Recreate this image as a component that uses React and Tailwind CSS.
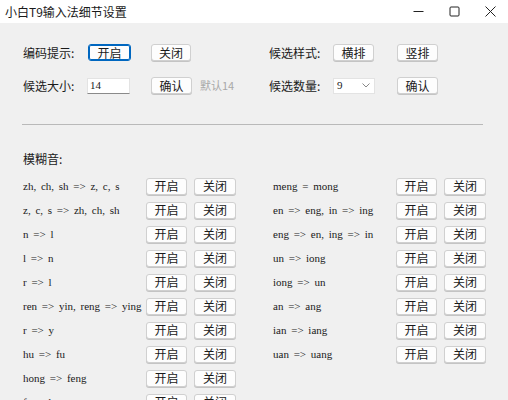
import React from 'react';

const cjk = { fontFamily: '"Microsoft YaHei", "Noto Sans CJK SC", "Noto Sans", sans-serif' };
const latin = { fontFamily: '"Liberation Serif", "Noto Sans CJK SC", serif' };

// 模糊音列表
const leftRules = [
  'zh, ch, sh => z, c, s',
  'z, c, s => zh, ch, sh',
  'n => l',
  'l => n',
  'r => l',
  'ren => yin, reng => ying',
  'r => y',
  'hu => fu',
  'hong => feng',
  'f => h',
];

const rightRules = [
  'meng = mong',
  'en => eng, in => ing',
  'eng => en, ing => in',
  'un => iong',
  'iong => un',
  'an => ang',
  'ian => iang',
  'uan => uang',
];

const Btn = ({ children, focused, w = 'w-[41px]' }) => (
  <button
    className={`${w} h-[17px] flex items-center justify-center rounded-[3px] bg-[#fdfdfd] text-[12px] text-[#1a1a1a] leading-none ${
      focused ? 'border border-[#0067c0] shadow-[inset_0_0_0_1px_#0067c0]' : 'border border-[#d0d0d0] shadow-[0_1px_0_#c4c4c4]'
    }`}
    style={cjk}
  >
    {children}
  </button>
);

const RuleRow = ({ text, textW }) => (
  <div className="h-[24px] flex items-center">
    <div className={`${textW} text-[11px] text-[#1a1a1a] whitespace-pre [word-spacing:2px]`} style={latin}>
      {text}
    </div>
    <div className="flex gap-[7px]">
      <Btn>开启</Btn>
      <Btn w="w-[42px]">关闭</Btn>
    </div>
  </div>
);

export default function App() {
  return (
    <div className="w-[508px] h-[400px] bg-[#f0f0f0] overflow-hidden text-[#1a1a1a]" style={cjk}>
      {/* 標題列 */}
      <div className="h-[23px] bg-white flex items-center justify-between">
        <span className="pl-[5px] text-[12px] pt-[1px]">小白T9输入法细节设置</span>
        <div className="flex items-center h-full">
          <div className="w-[36px] flex justify-center">
            <svg width="11" height="11" viewBox="0 0 11 11"><path d="M0.5 5.5h10" stroke="#222" strokeWidth="1" /></svg>
          </div>
          <div className="w-[36px] flex justify-center">
            <svg width="11" height="11" viewBox="0 0 11 11"><rect x="1" y="1" width="9" height="9" rx="1" fill="none" stroke="#222" strokeWidth="1" /></svg>
          </div>
          <div className="w-[36px] flex justify-center">
            <svg width="11" height="11" viewBox="0 0 11 11"><path d="M0.5 0.5l10 10M10.5 0.5l-10 10" stroke="#222" strokeWidth="1" /></svg>
          </div>
        </div>
      </div>

      {/* 基本設定 */}
      <div className="pl-[23px] pt-[21px] flex">
        <div className="w-[246px] flex flex-col gap-[16px]">
          <div className="h-[17px] flex items-center">
            <span className="w-[65px] text-[12px]">编码提示:</span>
            <Btn focused w="w-[43px]">开启</Btn>
            <div className="w-[20px]" />
            <Btn w="w-[40px]">关闭</Btn>
          </div>
          <div className="h-[17px] flex items-center">
            <span className="w-[64px] text-[12px]">候选大小:</span>
            <div className="w-[43px] h-[16px] bg-white border border-[#e3e3e3] border-b-[#8a8a8a] flex items-center pl-[2px] text-[11px]" style={latin}>
              14
            </div>
            <div className="w-[21px]" />
            <Btn w="w-[41px]">确认</Btn>
            <span className="ml-[8px] text-[11px] text-[#a8a8a8]">默认14</span>
          </div>
        </div>
        <div className="flex flex-col gap-[16px]">
          <div className="h-[17px] flex items-center">
            <span className="w-[64px] text-[12px]">候选样式:</span>
            <Btn>横排</Btn>
            <div className="w-[23px]" />
            <Btn>竖排</Btn>
          </div>
          <div className="h-[17px] flex items-center">
            <span className="w-[64px] text-[12px]">候选数量:</span>
            <div className="w-[42px] h-[16px] bg-white border border-[#e3e3e3] flex items-center justify-between pl-[3px] pr-[4px] text-[11px]" style={latin}>
              <span>9</span>
              <svg width="8" height="5" viewBox="0 0 8 5"><path d="M0.5 0.5l3.5 3.5 3.5-3.5" fill="none" stroke="#888" strokeWidth="1" /></svg>
            </div>
            <div className="w-[22px]" />
            <Btn>确认</Btn>
          </div>
        </div>
      </div>

      {/* 分隔線 */}
      <div className="ml-[22px] mt-[30px] w-[461px] h-px bg-[#b9b9b9]" />

      {/* 模糊音 */}
      <div className="pl-[23px] mt-[26px] text-[12px] h-[16px] flex items-center">模糊音:</div>
      <div className="pl-[23px] mt-[7px] flex">
        <div className="w-[250px] flex flex-col">
          {leftRules.map((r) => (
            <RuleRow key={r} text={r} textW="w-[123px]" />
          ))}
        </div>
        <div className="flex flex-col">
          {rightRules.map((r) => (
            <RuleRow key={r} text={r} textW="w-[123px]" />
          ))}
        </div>
      </div>
    </div>
  );
}
